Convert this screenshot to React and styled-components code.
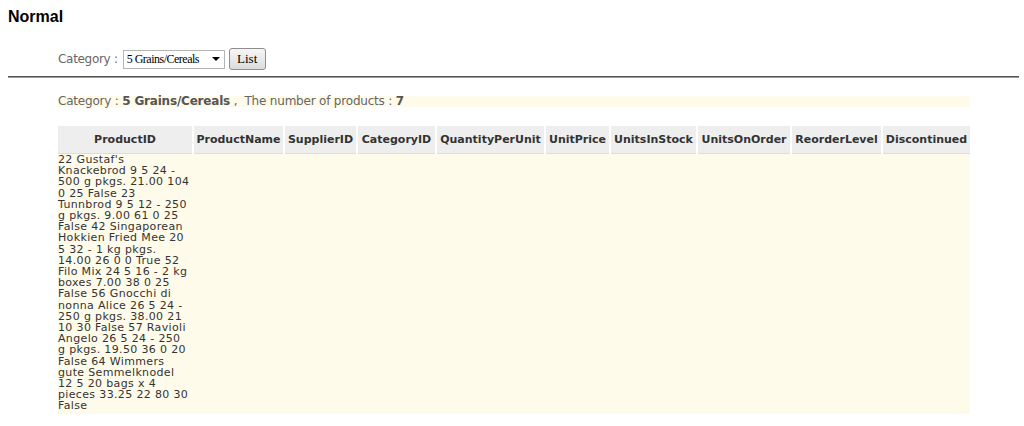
import React from "react";
import styled, { createGlobalStyle } from "styled-components";

// products of category 5, as the grid dumps them into its first cell
const lines = [
  "22 Gustaf's",
  "Knackebrod 9 5 24 -",
  "500 g pkgs. 21.00 104",
  "0 25 False 23",
  "Tunnbrod 9 5 12 - 250",
  "g pkgs. 9.00 61 0 25",
  "False 42 Singaporean",
  "Hokkien Fried Mee 20",
  "5 32 - 1 kg pkgs.",
  "14.00 26 0 0 True 52",
  "Filo Mix 24 5 16 - 2 kg",
  "boxes 7.00 38 0 25",
  "False 56 Gnocchi di",
  "nonna Alice 26 5 24 -",
  "250 g pkgs. 38.00 21",
  "10 30 False 57 Ravioli",
  "Angelo 26 5 24 - 250",
  "g pkgs. 19.50 36 0 20",
  "False 64 Wimmers",
  "gute Semmelknodel",
  "12 5 20 bags x 4",
  "pieces 33.25 22 80 30",
  "False",
];

const columns = [
  ["ProductID", 135],
  ["ProductName", 91],
  ["SupplierID", 73],
  ["CategoryID", 79],
  ["QuantityPerUnit", 109],
  ["UnitPrice", 65],
  ["UnitsInStock", 87],
  ["UnitsOnOrder", 94],
  ["ReorderLevel", 91],
  ["Discontinued", 88],
];

const GlobalStyle = createGlobalStyle`
  body {
    margin: 0;
    background: #fff;
    font-family: "DejaVu Sans", Verdana, sans-serif;
  }
`;

const Page = styled.div`
  padding: 8px 5px 0 8px;
`;

const Title = styled.h3`
  margin: 0;
  font-family: "Liberation Sans", Arial, sans-serif;
  font-size: 16px;
  font-weight: bold;
  color: #000;
  line-height: 18px;
`;

const Toolbar = styled.div`
  display: flex;
  align-items: center;
  margin: 22px 0 0 50px;
  height: 22px;
  color: #666;
  font-size: 12px;
  letter-spacing: -0.3px;
`;

const Label = styled.span`
  margin-right: 5px;
`;

const Select = styled.div`
  display: flex;
  align-items: center;
  justify-content: space-between;
  box-sizing: border-box;
  width: 102px;
  height: 19px;
  padding: 0 4px 0 3px;
  border: 1px solid #b5b5b5;
  background: #fff;
  color: #000;
  font-family: "Liberation Serif", "Times New Roman", serif;
  font-size: 12px;
  letter-spacing: -0.5px;
`;

const Arrow = styled.span`
  width: 0;
  height: 0;
  border-left: 4px solid transparent;
  border-right: 4px solid transparent;
  border-top: 4px solid #000;
`;

const Button = styled.button`
  box-sizing: border-box;
  margin-left: 4px;
  width: 37px;
  height: 22px;
  padding: 0;
  border: 1px solid #8e8e8e;
  border-radius: 3px;
  background: linear-gradient(#f6f6f6, #dcdcdc);
  color: #000;
  font-family: "Liberation Serif", "Times New Roman", serif;
  font-size: 13px;
`;

const Rule = styled.hr`
  margin: 6px 0 0;
  height: 0;
  border: 0;
  border-top: 1px solid #555;
  border-bottom: 1px solid #999;
`;

const Summary = styled.div`
  margin: 18px 0 0 50px;
  width: 912px;
  height: 11px;
  line-height: 11px;
  background: #fffbea;
  color: #666;
  font-size: 12px;
  letter-spacing: -0.2px;
  white-space: pre;
  b {
    color: #555;
  }
`;

const Grid = styled.table`
  margin: 19px 0 0 50px;
  width: 912px;
  table-layout: fixed;
  border-collapse: collapse;
  font-size: 12px;
`;

const Head = styled.th`
  height: 27px;
  padding: 0;
  background: #eee;
  border-right: ${(p) => (p.$last ? "0" : "2px solid #fff")};
  border-bottom: 1px solid #ddd;
  color: #333;
  font-size: 11px;
  font-weight: bold;
  text-align: center;
  white-space: nowrap;
`;

const Cell = styled.td`
  padding: 0;
  background: #fffbea;
  vertical-align: top;
`;

const Body = styled(Cell)`
  padding: 0 0 2px;
  color: #333;
  font-size: 11px;
  line-height: 11.2px;
  letter-spacing: 0.35px;
  white-space: nowrap;
`;

export default function App() {
  return (
    <Page>
      <GlobalStyle />
      <Title>Normal</Title>
      <Toolbar>
        <Label>Category :</Label>
        <Select>
          <span>5 Grains/Cereals</span>
          <Arrow />
        </Select>
        <Button>List</Button>
      </Toolbar>
      <Rule />
      <Summary>
        Category : <b>5 Grains/Cereals</b> ,  The number of products : <b>7</b>
      </Summary>
      <Grid>
        <colgroup>
          {columns.map(([name, w]) => (
            <col key={name} style={{ width: w }} />
          ))}
        </colgroup>
        <thead>
          <tr>
            {columns.map(([name], i) => (
              <Head key={name} $last={i === columns.length - 1}>
                {name}
              </Head>
            ))}
          </tr>
        </thead>
        <tbody>
          <tr>
            <Body>
              {lines.map((line, i) => (
                <React.Fragment key={i}>
                  {i > 0 && <br />}
                  {line}
                </React.Fragment>
              ))}
            </Body>
            {columns.slice(1).map(([name]) => (
              <Cell key={name} />
            ))}
          </tr>
        </tbody>
      </Grid>
    </Page>
  );
}
